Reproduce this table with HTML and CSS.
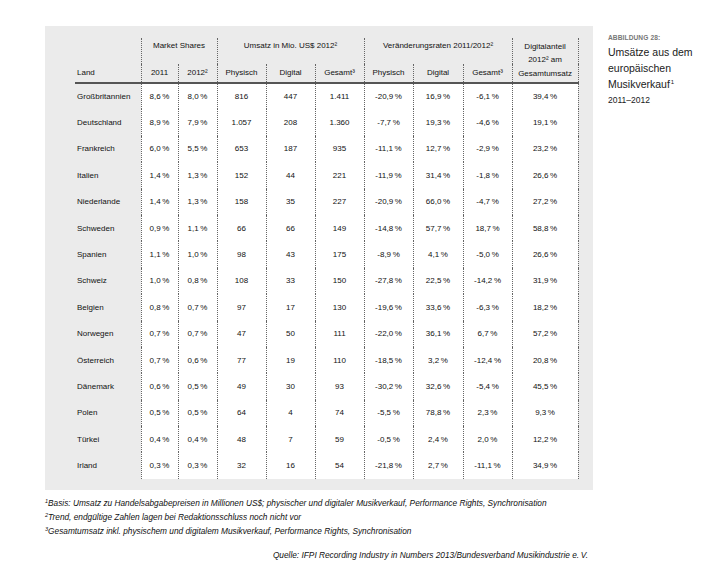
FILE: index.html
```html
<!DOCTYPE html>
<html lang="de">
<head>
<meta charset="utf-8">
<title>Umsätze aus dem europäischen Musikverkauf</title>
<link rel="stylesheet" href="styles.css">
</head>
<body>
<div class="page">
  <div class="top">
    <div class="panel">
      <table class="data">
        <colgroup>
          <col class="c-land"><col class="c-y1"><col class="c-y2">
          <col class="c-n"><col class="c-n"><col class="c-n">
          <col class="c-n"><col class="c-n2"><col class="c-n">
          <col class="c-share">
        </colgroup>
        <thead>
          <tr class="h1">
            <th class="land"></th>
            <th colspan="2" class="sep">Market Shares</th>
            <th colspan="3" class="sep">Umsatz in Mio. US$ 2012²</th>
            <th colspan="3" class="sep">Veränderungsraten 2011/2012²</th>
            <th rowspan="2" class="sep last share">Digitalanteil<br>2012² am<br>Gesamtumsatz</th>
          </tr>
          <tr class="h2">
            <th class="land">Land</th>
            <th class="sep">2011</th><th class="sep">2012²</th>
            <th class="sep">Physisch</th><th class="sep">Digital</th><th class="sep">Gesamt³</th>
            <th class="sep">Physisch</th><th class="sep">Digital</th><th class="sep">Gesamt³</th>
          </tr>
        </thead>
        <tbody>
          <tr><th>Großbritannien</th><td>8,6&thinsp;%</td><td>8,0&thinsp;%</td><td>816</td><td>447</td><td>1.411</td><td>-20,9&thinsp;%</td><td>16,9&thinsp;%</td><td>-6,1&thinsp;%</td><td class="last">39,4&thinsp;%</td></tr>
          <tr><th>Deutschland</th><td>8,9&thinsp;%</td><td>7,9&thinsp;%</td><td>1.057</td><td>208</td><td>1.360</td><td>-7,7&thinsp;%</td><td>19,3&thinsp;%</td><td>-4,6&thinsp;%</td><td class="last">19,1&thinsp;%</td></tr>
          <tr><th>Frankreich</th><td>6,0&thinsp;%</td><td>5,5&thinsp;%</td><td>653</td><td>187</td><td>935</td><td>-11,1&thinsp;%</td><td>12,7&thinsp;%</td><td>-2,9&thinsp;%</td><td class="last">23,2&thinsp;%</td></tr>
          <tr><th>Italien</th><td>1,4&thinsp;%</td><td>1,3&thinsp;%</td><td>152</td><td>44</td><td>221</td><td>-11,9&thinsp;%</td><td>31,4&thinsp;%</td><td>-1,8&thinsp;%</td><td class="last">26,6&thinsp;%</td></tr>
          <tr><th>Niederlande</th><td>1,4&thinsp;%</td><td>1,3&thinsp;%</td><td>158</td><td>35</td><td>227</td><td>-20,9&thinsp;%</td><td>66,0&thinsp;%</td><td>-4,7&thinsp;%</td><td class="last">27,2&thinsp;%</td></tr>
          <tr><th>Schweden</th><td>0,9&thinsp;%</td><td>1,1&thinsp;%</td><td>66</td><td>66</td><td>149</td><td>-14,8&thinsp;%</td><td>57,7&thinsp;%</td><td>18,7&thinsp;%</td><td class="last">58,8&thinsp;%</td></tr>
          <tr><th>Spanien</th><td>1,1&thinsp;%</td><td>1,0&thinsp;%</td><td>98</td><td>43</td><td>175</td><td>-8,9&thinsp;%</td><td>4,1&thinsp;%</td><td>-5,0&thinsp;%</td><td class="last">26,6&thinsp;%</td></tr>
          <tr><th>Schweiz</th><td>1,0&thinsp;%</td><td>0,8&thinsp;%</td><td>108</td><td>33</td><td>150</td><td>-27,8&thinsp;%</td><td>22,5&thinsp;%</td><td>-14,2&thinsp;%</td><td class="last">31,9&thinsp;%</td></tr>
          <tr><th>Belgien</th><td>0,8&thinsp;%</td><td>0,7&thinsp;%</td><td>97</td><td>17</td><td>130</td><td>-19,6&thinsp;%</td><td>33,6&thinsp;%</td><td>-6,3&thinsp;%</td><td class="last">18,2&thinsp;%</td></tr>
          <tr><th>Norwegen</th><td>0,7&thinsp;%</td><td>0,7&thinsp;%</td><td>47</td><td>50</td><td>111</td><td>-22,0&thinsp;%</td><td>36,1&thinsp;%</td><td>6,7&thinsp;%</td><td class="last">57,2&thinsp;%</td></tr>
          <tr><th>Österreich</th><td>0,7&thinsp;%</td><td>0,6&thinsp;%</td><td>77</td><td>19</td><td>110</td><td>-18,5&thinsp;%</td><td>3,2&thinsp;%</td><td>-12,4&thinsp;%</td><td class="last">20,8&thinsp;%</td></tr>
          <tr><th>Dänemark</th><td>0,6&thinsp;%</td><td>0,5&thinsp;%</td><td>49</td><td>30</td><td>93</td><td>-30,2&thinsp;%</td><td>32,6&thinsp;%</td><td>-5,4&thinsp;%</td><td class="last">45,5&thinsp;%</td></tr>
          <tr><th>Polen</th><td>0,5&thinsp;%</td><td>0,5&thinsp;%</td><td>64</td><td>4</td><td>74</td><td>-5,5&thinsp;%</td><td>78,8&thinsp;%</td><td>2,3&thinsp;%</td><td class="last">9,3&thinsp;%</td></tr>
          <tr><th>Türkei</th><td>0,4&thinsp;%</td><td>0,4&thinsp;%</td><td>48</td><td>7</td><td>59</td><td>-0,5&thinsp;%</td><td>2,4&thinsp;%</td><td>2,0&thinsp;%</td><td class="last">12,2&thinsp;%</td></tr>
          <tr><th>Irland</th><td>0,3&thinsp;%</td><td>0,3&thinsp;%</td><td>32</td><td>16</td><td>54</td><td>-21,8&thinsp;%</td><td>2,7&thinsp;%</td><td>-11,1&thinsp;%</td><td class="last">34,9&thinsp;%</td></tr>
        </tbody>
      </table>
    </div>
    <div class="caption">
      <div class="label">ABBILDUNG 28:</div>
      <div class="title">Umsätze aus dem<br>europäischen<br>Musikverkauf<sup>1</sup></div>
      <div class="years">2011–2012</div>
    </div>
  </div>
  <div class="notes">
    <p><sup>1</sup>Basis: Umsatz zu Handelsabgabepreisen in Millionen US$; physischer und digitaler Musikverkauf, Performance Rights, Synchronisation</p>
    <p><sup>2</sup>Trend, endgültige Zahlen lagen bei Redaktionsschluss noch nicht vor</p>
    <p><sup>3</sup>Gesamtumsatz inkl. physischem und digitalem Musikverkauf, Performance Rights, Synchronisation</p>
  </div>
  <div class="source">Quelle: IFPI Recording Industry in Numbers 2013/Bundesverband Musikindustrie e.&thinsp;V.</div>
</div>
</body>
</html>
```

FILE: styles.css
```css
html, body {
  margin: 0;
  padding: 0;
  background: #ffffff;
}

body {
  font-family: "Liberation Sans", Arial, sans-serif;
  color: #111111;
}

.page {
  width: 710px;
  height: 575px;
  padding: 26px 0 0 45px;
  box-sizing: border-box;
}

.top {
  display: flex;
  align-items: flex-start;
}

.panel {
  width: 548px;
  height: 464px;
  box-sizing: border-box;
  background: #ebebeb;
  padding: 12px 15px 0 30px;
}

.data {
  border-collapse: collapse;
  table-layout: fixed;
  width: 503px;
  font-size: 8px;
}

.c-land { width: 66px; }
.c-y1 { width: 37px; }
.c-y2 { width: 39px; }
.c-n { width: 49px; }
.c-n2 { width: 50px; }
.c-share { width: 66px; }

.data th,
.data td {
  padding: 0;
  font-weight: normal;
  white-space: nowrap;
  color: #111111;
}

.data thead th {
  text-align: center;
}

.data .h1 th {
  height: 25px;
  vertical-align: top;
  line-height: 13.5px;
  padding-top: 1px;
}

.data .h2 th {
  height: 18px;
  vertical-align: middle;
  line-height: 10px;
  border-bottom: 2px solid #555555;
}

.data thead th.share {
  vertical-align: top;
  line-height: 13.5px;
  padding-top: 1.5px;
  border-bottom: 2px solid #555555;
}

.data thead th.land {
  text-align: left;
  padding-left: 2px;
}

.data .sep {
  border-left: 1px dotted #666666;
}

.data .last {
  border-right: 1px dotted #666666;
}

.data tbody tr {
  height: 26.4px;
}

.data tbody th {
  text-align: left;
  padding-left: 2px;
}

.data tbody td {
  background: #ffffff;
  text-align: center;
  border-left: 1px dotted #666666;
}

.caption {
  margin-left: 15px;
  padding-top: 7px;
  color: #1a1a1a;
}

.caption .label {
  font-size: 6.6px;
  font-weight: bold;
  color: #777777;
  letter-spacing: 0.1px;
  line-height: 10px;
}

.caption .title {
  font-size: 10.5px;
  line-height: 16px;
  margin-top: 1px;
}

.caption .title sup {
  font-size: 6px;
  vertical-align: 4px;
  line-height: 0;
  margin-left: 1px;
}

.caption .years {
  font-size: 8.5px;
  line-height: 12px;
  margin-top: 2px;
}

.notes {
  margin-top: 6px;
  font-size: 8.3px;
  font-style: italic;
  line-height: 14px;
  color: #111111;
}

.notes p {
  margin: 0;
}

.notes sup {
  font-size: 5.5px;
  vertical-align: 3px;
  line-height: 0;
}

.source {
  margin-top: 10px;
  width: 543px;
  text-align: right;
  font-size: 8.3px;
  font-style: italic;
  line-height: 14px;
  color: #111111;
}
```
